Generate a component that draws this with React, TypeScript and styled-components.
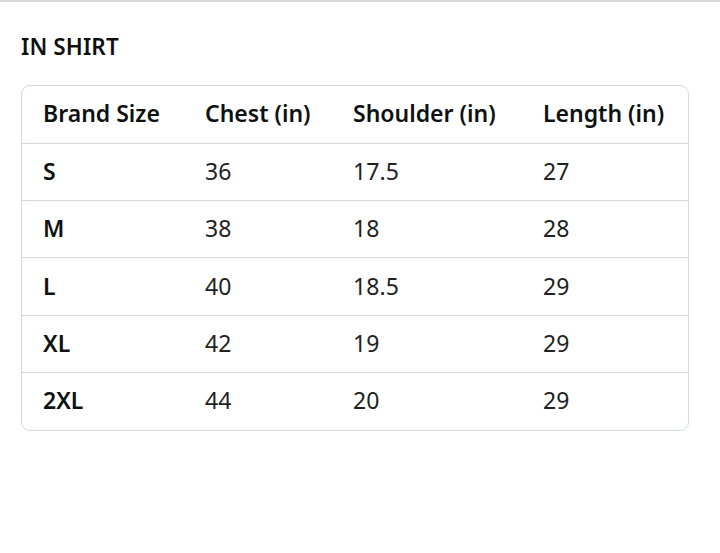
import styled, { createGlobalStyle } from "styled-components";

const GlobalStyle = createGlobalStyle`
  html, body {
    margin: 0;
    padding: 0;
    background: #fff;
  }
  body {
    font-family: "Noto Sans", "Liberation Sans", Arial, sans-serif;
    color: #0f1111;
  }
`;

const Page = styled.div`
  width: 720px;
  height: 553px;
  box-sizing: border-box;
  border-top: 2px solid #d5d9d9;
  padding: 30px 32px 0 21px;
`;

const Heading = styled.h2`
  margin: 0 0 23px;
  font-size: 22.5px;
  font-weight: 600;
  line-height: 30px;
  letter-spacing: 0.1px;
`;

const TableBox = styled.div`
  width: 666px;
  border: 1.5px solid #d5d9d9;
  border-radius: 9px;
  overflow: hidden;
`;

const Table = styled.table`
  width: 100%;
  border-collapse: collapse;
  table-layout: fixed;
`;

const Row = styled.tr`
  height: 57.3px;
  & + & {
    border-top: 1.5px solid #d5d9d9;
  }
`;

const Cell = styled.td<{ $bold?: boolean }>`
  padding: 0 0 2px 21px;
  font-size: 23px;
  font-weight: ${(p) => (p.$bold ? 600 : 400)};
  letter-spacing: ${(p) => (p.$bold ? "0px" : "0.1px")};
  color: ${(p) => (p.$bold ? "#0f1111" : "#1f2222")};
  white-space: nowrap;
  text-align: left;
  vertical-align: middle;
`;

const columns = [
  { title: "Brand Size", width: 162 },
  { title: "Chest (in)", width: 148 },
  { title: "Shoulder (in)", width: 190 },
  { title: "Length (in)", width: 166 },
];

const rows = [
  ["S", "36", "17.5", "27"],
  ["M", "38", "18", "28"],
  ["L", "40", "18.5", "29"],
  ["XL", "42", "19", "29"],
  ["2XL", "44", "20", "29"],
];

const App = () => {
  return (
    <>
      <GlobalStyle />
      <Page>
        <Heading>IN SHIRT</Heading>
        <TableBox>
          <Table>
            <colgroup>
              {columns.map((c) => (
                <col key={c.title} style={{ width: c.width }} />
              ))}
            </colgroup>
            <tbody>
              <Row>
                {columns.map((c) => (
                  <Cell key={c.title} $bold>
                    {c.title}
                  </Cell>
                ))}
              </Row>
              {rows.map((r) => (
                <Row key={r[0]}>
                  {r.map((v, i) => (
                    <Cell key={i} $bold={i === 0}>
                      {v}
                    </Cell>
                  ))}
                </Row>
              ))}
            </tbody>
          </Table>
        </TableBox>
      </Page>
    </>
  );
};

export default App;
